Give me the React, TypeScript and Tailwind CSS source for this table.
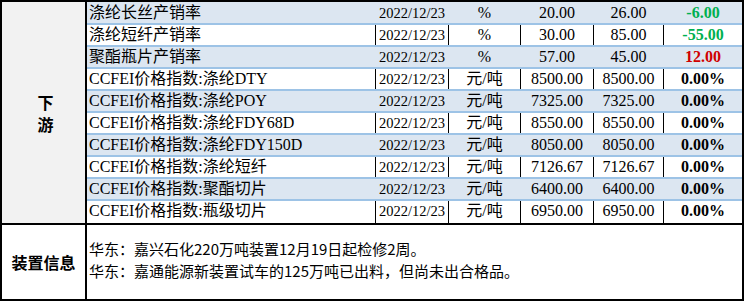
import React from "react";

interface Row {
  name: string;
  unit: string;
  cur: string;
  prev: string;
  change: string;
  tone: "green" | "red" | "black";
}

const rows: Row[] = [
  { name: "涤纶长丝产销率", unit: "%", cur: "20.00", prev: "26.00", change: "-6.00", tone: "green" },
  { name: "涤纶短纤产销率", unit: "%", cur: "30.00", prev: "85.00", change: "-55.00", tone: "green" },
  { name: "聚酯瓶片产销率", unit: "%", cur: "57.00", prev: "45.00", change: "12.00", tone: "red" },
  { name: "CCFEI价格指数:涤纶DTY", unit: "元/吨", cur: "8500.00", prev: "8500.00", change: "0.00%", tone: "black" },
  { name: "CCFEI价格指数:涤纶POY", unit: "元/吨", cur: "7325.00", prev: "7325.00", change: "0.00%", tone: "black" },
  { name: "CCFEI价格指数:涤纶FDY68D", unit: "元/吨", cur: "8550.00", prev: "8550.00", change: "0.00%", tone: "black" },
  { name: "CCFEI价格指数:涤纶FDY150D", unit: "元/吨", cur: "8050.00", prev: "8050.00", change: "0.00%", tone: "black" },
  { name: "CCFEI价格指数:涤纶短纤", unit: "元/吨", cur: "7126.67", prev: "7126.67", change: "0.00%", tone: "black" },
  { name: "CCFEI价格指数:聚酯切片", unit: "元/吨", cur: "6400.00", prev: "6400.00", change: "0.00%", tone: "black" },
  { name: "CCFEI价格指数:瓶级切片", unit: "元/吨", cur: "6950.00", prev: "6950.00", change: "0.00%", tone: "black" },
];

const serif = "font-['Liberation_Serif','Noto_Sans_CJK_SC',serif]";
const sans = "font-['Noto_Sans_CJK_SC','Liberation_Sans',sans-serif]";

export default function App() {
  return (
    <div className="w-[744px] h-[301px] bg-white flex flex-col border-2 border-black text-black">
      {/* Downstream data */}
      <div className="flex border-b-2 border-black">
        <div className={`w-[85px] shrink-0 bg-[#f2f2f2] border-r-2 border-black flex flex-col items-center justify-center pl-1 text-[16px] font-bold leading-[22px] ${sans}`}>
          <span>下</span>
          <span>游</span>
        </div>
        <div className="flex-1">
          {rows.map((r, i) => {
            const blue = i % 2 === 0;
            const line = blue ? "border-transparent" : "border-black";
            const tone =
              r.tone === "green"
                ? "text-[#00b050]"
                : r.tone === "red"
                ? "text-[#d00000]"
                : "text-black";
            return (
              <div
                key={r.name}
                className={`grid grid-cols-[288px_73px_72px_73px_70px_79px] leading-[20px] ${serif} ${
                  i === 0 ? "h-[23px] pt-px" : "h-[22px]"
                } ${blue ? "bg-[#dce6f1]" : "bg-white"} ${
                  i < rows.length - 1 ? "border-b-2 border-[#9dc3e6]" : ""
                }`}
              >
                <div className="pl-[2px] text-[16px] whitespace-nowrap">{r.name}</div>
                <div className={`border-l ${line} pl-[3px] text-[14.5px] whitespace-nowrap`}>2022/12/23</div>
                <div className={`border-l ${line} text-center text-[16px]`}>{r.unit}</div>
                <div className={`border-l ${line} text-center text-[16px]`}>{r.cur}</div>
                <div className={`border-l ${line} text-center text-[16px]`}>{r.prev}</div>
                <div className={`border-l ${line} text-center text-[16px] font-bold ${tone}`}>{r.change}</div>
              </div>
            );
          })}
        </div>
      </div>

      {/* Plant info */}
      <div className="flex flex-1">
        <div className={`w-[85px] shrink-0 border-r-2 border-black flex items-center justify-center text-[16px] font-bold ${sans}`}>
          装置信息
        </div>
        <div className={`flex-1 flex flex-col justify-center pl-[2px] pb-[4px] text-[15px] leading-[22px] ${sans}`}>
          <p>华东：嘉兴石化220万吨装置12月19日起检修2周。</p>
          <p>华东：嘉通能源新装置试车的125万吨已出料，但尚未出合格品。</p>
        </div>
      </div>
    </div>
  );
}
